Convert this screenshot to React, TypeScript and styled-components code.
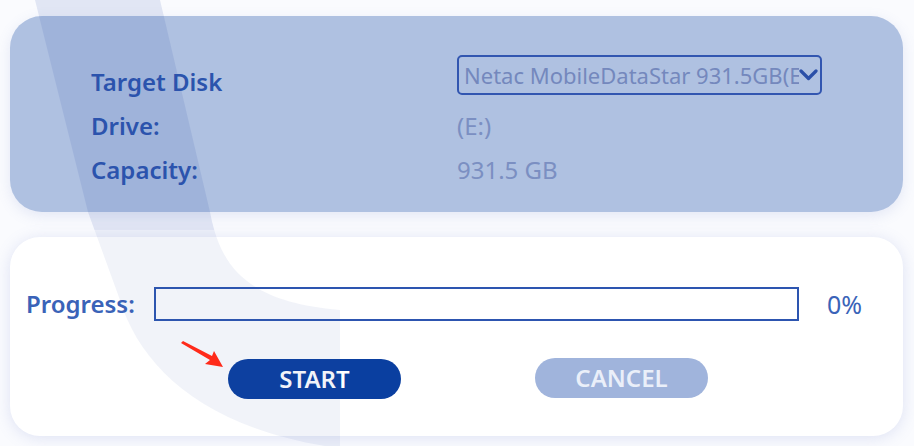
import { FC } from "react";
import styled, { createGlobalStyle } from "styled-components";

const GlobalStyle = createGlobalStyle`
  html, body {
    margin: 0;
    padding: 0;
    background: #fafbfe;
  }
  body {
    font-family: "Noto Sans", "Open Sans", sans-serif;
  }
`;

const Page = styled.div`
  position: relative;
  width: 914px;
  height: 446px;
  box-sizing: border-box;
  padding: 16px 11px 10px 10px;
  display: flex;
  flex-direction: column;
  gap: 25px;
  overflow: hidden;
`;

const DiskPanel = styled.section`
  height: 196px;
  box-sizing: border-box;
  padding: 44px 0 20px 81px;
  background: #afc1e1;
  border-radius: 32px;
  box-shadow: 0 4px 14px rgba(110, 130, 200, 0.16);
  display: grid;
  grid-template-columns: 366px 365px;
  grid-auto-rows: 44px;
  align-items: center;
`;

const Label = styled.div`
  font-size: 24px;
  font-weight: 600;
  line-height: 30px;
  color: #2b54ad;
  white-space: nowrap;
`;

const Value = styled.div`
  font-size: 24px;
  line-height: 30px;
  color: #7b8fc2;
  white-space: nowrap;
`;

const Select = styled.div`
  margin-top: -14px;
  height: 40px;
  box-sizing: border-box;
  border: 2px solid #3256b0;
  border-radius: 5px;
  display: flex;
  align-items: center;
  padding: 0 2px 0 5px;
`;

const SelectText = styled.span`
  flex: 1;
  overflow: hidden;
  white-space: nowrap;
  font-size: 22px;
  color: #7488bd;
`;

const Chevron = styled.svg`
  flex: none;
  width: 19px;
  height: 14px;
`;

const ProgressPanel = styled.section`
  height: 199px;
  box-sizing: border-box;
  padding: 50px 0 38px 16px;
  background: #ffffff;
  border-radius: 30px;
  box-shadow: 0 2px 16px rgba(110, 125, 200, 0.2);
  display: flex;
  flex-direction: column;
  gap: 37px;
`;

const ProgressRow = styled.div`
  display: flex;
  align-items: center;
  height: 34px;
`;

const ProgressLabel = styled(Label)`
  width: 128px;
  color: #3a63b8;
`;

const Bar = styled.div`
  width: 645px;
  height: 34px;
  box-sizing: border-box;
  border: 2px solid #2d55b0;
  background: transparent;
`;

const Percent = styled.div`
  margin-left: 28px;
  font-size: 25px;
  color: #3a63b8;
`;

const Buttons = styled.div`
  display: flex;
  gap: 134px;
  padding-left: 202px;
  align-items: center;
`;

const Button = styled.button<{ $primary?: boolean }>`
  width: 173px;
  height: 40px;
  border: none;
  border-radius: 20px;
  font-family: inherit;
  font-size: 24px;
  font-weight: 600;
  line-height: 40px;
  padding: 0;
  color: ${(p) => (p.$primary ? "#ffffff" : "#eaeff9")};
  background: ${(p) => (p.$primary ? "#0a3fa0" : "#a0b4dc")};
  margin-top: ${(p) => (p.$primary ? "1px" : "-1px")};
`;

const Swoosh = styled.svg`
  position: absolute;
  left: 0;
  top: 0;
  pointer-events: none;
`;

const Arrow = styled.svg`
  position: absolute;
  left: 178px;
  top: 338px;
  pointer-events: none;
`;

const swooshPath =
  "M35 0 L160 0 L210 212 C220 265 245 302 340 310 L340 446 L325 446 C200 425 140 365 120 300 L88 212 Z";

const App: FC = () => {
  return (
    <>
      <GlobalStyle />
      <Page>
        <DiskPanel>
          <Label>Target Disk</Label>
          <Select>
            <SelectText>Netac MobileDataStar 931.5GB(E:)</SelectText>
            <Chevron viewBox="0 0 19 14">
              <polyline
                points="2,3 9.5,10.5 17,3"
                fill="none"
                stroke="#2a4fa8"
                strokeWidth="3.2"
                strokeLinecap="round"
                strokeLinejoin="round"
              />
            </Chevron>
          </Select>
          <Label>Drive:</Label>
          <Value>(E:)</Value>
          <Label>Capacity:</Label>
          <Value>931.5 GB</Value>
        </DiskPanel>

        <ProgressPanel>
          <ProgressRow>
            <ProgressLabel>Progress:</ProgressLabel>
            <Bar />
            <Percent>0%</Percent>
          </ProgressRow>
          <Buttons>
            <Button $primary>START</Button>
            <Button>CANCEL</Button>
          </Buttons>
        </ProgressPanel>

        <Swoosh width="914" height="446" viewBox="0 0 914 446">
          <defs>
            <clipPath id="swoosh-top">
              <rect x="0" y="0" width="914" height="230" />
            </clipPath>
            <clipPath id="swoosh-bottom">
              <rect x="0" y="230" width="914" height="216" />
            </clipPath>
          </defs>
          <path d={swooshPath} fill="rgba(50, 80, 170, 0.12)" clipPath="url(#swoosh-top)" />
          <path d={swooshPath} fill="rgba(50, 80, 170, 0.07)" clipPath="url(#swoosh-bottom)" />
        </Swoosh>

        <Arrow width="50" height="34" viewBox="0 0 50 34">
          <polygon points="3,5 5,3 34,18 36,13 45,29 27,26 32,22" fill="#ff2a1a" />
        </Arrow>
      </Page>
    </>
  );
};

export default App;
